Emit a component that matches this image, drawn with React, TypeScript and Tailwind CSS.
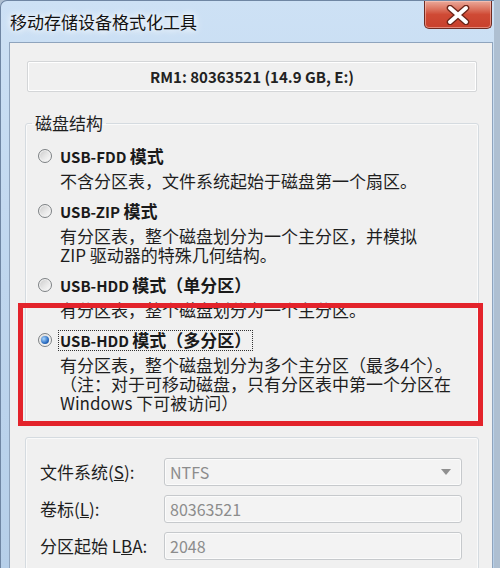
const font = "font-['Noto_Sans_CJK_SC',sans-serif]";

const options = [
  { latin: "USB-FDD", cjk: "模式", text: "不含分区表，文件系统起始于磁盘第一个扇区。" },
  {
    latin: "USB-ZIP",
    cjk: "模式",
    text: "有分区表，整个磁盘划分为一个主分区，并模拟\nZIP 驱动器的特殊几何结构。",
  },
  { latin: "USB-HDD", cjk: "模式（单分区）", text: "有分区表，整个磁盘划分为一个主分区。" },
  {
    latin: "USB-HDD",
    cjk: "模式（多分区）",
    text: "有分区表，整个磁盘划分为多个主分区（最多4个）。\n（注：对于可移动磁盘，只有分区表中第一个分区在\nWindows 下可被访问）",
    selected: true,
  },
];

const Radio = ({ selected }: { selected?: boolean }) => (
  <span className="w-[14px] h-[14px] shrink-0 rounded-full border border-[#7d8184] bg-gradient-to-br from-[#c9c9c9] via-[#e6e6e6] to-[#fdfdfd] shadow-[inset_0_0_0_1px_#f2f2f2] flex items-center justify-center">
    {selected && (
      <span className="w-[8px] h-[8px] rounded-full bg-[radial-gradient(circle_at_35%_35%,#a8d6ff,#2b6dc2_60%,#163f80)]" />
    )}
  </span>
);

const Field = ({
  label,
  value,
  combo,
}: {
  label: React.ReactNode;
  value: string;
  combo?: boolean;
}) => (
  <div className="flex items-center h-[28px]">
    <div className="w-[124px] text-[17px] text-[#1e1e1e] leading-[20px]">{label}</div>
    <div className="w-[298px] h-[28px] rounded-[3px] border border-[#c6c9cc] bg-[#f3f3f3] shadow-[inset_0_0_0_1px_#fbfbfb] flex items-center justify-between pl-[5px] pr-[10px]">
      <span className="text-[16px] text-[#8c8c8c] leading-[20px]">{value}</span>
      {combo && (
        <svg width="10" height="6" viewBox="0 0 10 6">
          <path d="M0 0 H10 L5 6 Z" fill="#8f8f8f" />
        </svg>
      )}
    </div>
  </div>
);

export default function App() {
  return (
    <div className={`w-[500px] h-[568px] overflow-hidden bg-[#aebfd1] flex ${font}`}>
      <div className="w-[494px] h-[568px] flex flex-col rounded-tl-[7px] border-l border-t border-[#6f86a3] bg-gradient-to-b from-[#cde1f5] via-[#bfd6ee] to-[#b6cfe9]">
        <div className="h-[41px] flex items-start justify-between shrink-0">
          <div className="pl-[9px] pt-[10px] text-[17px] leading-[22px] text-[#111] [text-shadow:0_0_6px_#ffffff,0_0_10px_#ffffff]">
            移动存储设备格式化工具
          </div>
          <div className="w-[68px] h-[28px] mr-[2px] rounded-b-[5px] border border-t-0 border-[#6e2b22] bg-gradient-to-b from-[#eaa99a] via-[#cf4a35] to-[#c8402c] flex items-center justify-center shadow-[inset_0_0_0_1px_rgba(255,210,200,0.5)]">
            <svg width="28" height="20" viewBox="0 0 28 20">
              <path d="M6 3 L22 17 M22 3 L6 17" stroke="#6a2418" strokeWidth="6.5" strokeLinecap="round" />
              <path d="M6 3 L22 17 M22 3 L6 17" stroke="#ffffff" strokeWidth="4" strokeLinecap="round" />
            </svg>
          </div>
        </div>
        <div className="relative flex-1 ml-[8px] mr-[1px] border-l border-t border-r border-[#8fa4bd] bg-[#f0f0f0] pt-[18px] pl-[15px] pr-[13px]">
          <div className="mx-[2px] h-[31px] rounded-[2px] border border-[#d4d6d8] shadow-[inset_0_0_0_1px_#ffffff] flex items-center justify-center">
            <span className="text-[15px] font-bold text-[#222] leading-[20px]">
              RM1: 80363521 (14.9 GB, E:)
            </span>
          </div>

          <fieldset className="mt-[21px] rounded-[3px] border border-[#d5dbe0] shadow-[inset_0_0_0_1px_#fafafa] pl-[12px] pt-[12px] pb-[10px]">
            <legend className="-ml-[6px] px-[3px] text-[17px] leading-[20px] text-[#1e1e1e]">
              磁盘结构
            </legend>
            <div className="flex flex-col gap-[10px]">
              {options.map((o, i) => (
                <div key={i}>
                  <div className="h-[22px] flex items-center gap-[6px]">
                    <Radio selected={o.selected} />
                    <span
                      className={`font-bold leading-[18px] text-[#1a1a1a] px-[1px] border border-dotted ${
                        o.selected ? "border-[#333]" : "border-transparent"
                      }`}
                    >
                      <span className="text-[15px]">{o.latin} </span>
                      <span className="text-[17px]">{o.cjk}</span>
                    </span>
                  </div>
                  <div className="mt-[4px] pl-[22px] text-[17px] leading-[19px] text-[#1e1e1e] whitespace-pre-line">
                    {o.text}
                  </div>
                </div>
              ))}
            </div>
          </fieldset>

          <fieldset className="mt-[14px] rounded-[3px] border border-[#d5dbe0] shadow-[inset_0_0_0_1px_#fafafa] pl-[14px] pt-[20px] pb-[20px] flex flex-col gap-[9px]">
            <Field
              label={
                <>
                  文件系统(<span className="underline">S</span>):
                </>
              }
              value="NTFS"
              combo
            />
            <Field
              label={
                <>
                  卷标(<span className="underline">L</span>):
                </>
              }
              value="80363521"
            />
            <Field
              label={
                <>
                  分区起始 L<span className="underline">B</span>A:
                </>
              }
              value="2048"
            />
          </fieldset>

          <div className="absolute left-[8px] top-[260px] w-[465px] h-[123px] border-[5px] border-[#e3232b]" />
        </div>
      </div>
    </div>
  );
}
